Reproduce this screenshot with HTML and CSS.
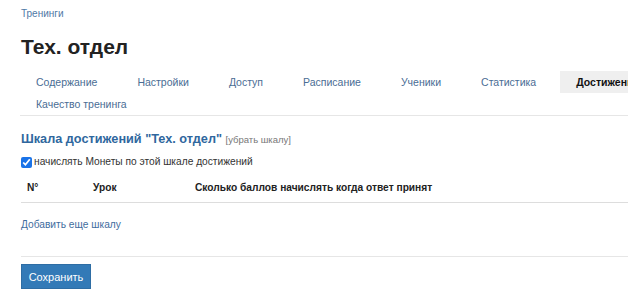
FILE: index.html
```html
<!DOCTYPE html>
<html lang="ru">
<head>
    <meta charset="UTF-8">
    <title>Тех. отдел</title>
    <link rel="stylesheet" href="styles.css">
</head>
<body>
    <div class="page">
        <a href="#" class="crumb">Тренинги</a>
        <h1>Тех. отдел</h1>

        <ul class="tabs">
            <li><a href="#">Содержание</a></li>
            <li><a href="#">Настройки</a></li>
            <li><a href="#">Доступ</a></li>
            <li><a href="#">Расписание</a></li>
            <li><a href="#">Ученики</a></li>
            <li><a href="#">Статистика</a></li>
            <li class="active"><a href="#">Достижения</a></li>
            <li><a href="#">Качество тренинга</a></li>
        </ul>

        <h3 class="scale-title">Шкала достижений "Тех. отдел" <a href="#" class="remove">[убрать шкалу]</a></h3>

        <label class="check">
            <input type="checkbox" checked> начислять Монеты по этой шкале достижений
        </label>

        <table class="scores">
            <thead>
                <tr>
                    <th class="col-num">N°</th>
                    <th class="col-lesson">Урок</th>
                    <th>Сколько баллов начислять когда ответ принят</th>
                </tr>
            </thead>
        </table>

        <a href="#" class="add-link">Добавить еще шкалу</a>

        <div class="actions">
            <button class="btn">Сохранить</button>
        </div>
    </div>
</body>
</html>
```

FILE: styles.css
```css
* {
    margin: 0;
    padding: 0;
    box-sizing: border-box;
}
html, body {
    overflow: hidden;
}
body {
    font-family: "Liberation Sans", Arial, sans-serif;
    font-size: 10.2px;
    color: #333;
    background: #fff;
}
.page {
    width: 740px;
    padding: 7px 0 0 21px;
}
a {
    color: #3a6a9c;
    text-decoration: none;
}
.crumb {
    display: block;
    font-size: 10px;
    line-height: 14px;
    color: #5079a6;
}
h1 {
    font-size: 21px;
    font-weight: 700;
    color: #222;
    line-height: 26px;
    margin-top: 13px;
    margin-bottom: 11px;
}
.tabs {
    list-style: none;
    display: flex;
    flex-wrap: wrap;
    margin-left: -1px;
    border-bottom: 1px solid #e6e6e6;
    font-size: 10.5px;
}
.tabs li {
    margin-right: 8px;
}
.tabs a {
    display: block;
    padding: 0 16px;
    line-height: 22px;
    color: #4a6d94;
    white-space: nowrap;
}
.tabs .active a {
    background: #efefef;
    color: #111;
    font-weight: 700;
}
.scale-title {
    margin-top: 14px;
    font-size: 12.7px;
    font-weight: 700;
    color: #2f679e;
    line-height: 18px;
}
.scale-title .remove {
    font-size: 9.5px;
    font-weight: 400;
    color: #777;
}
.check {
    display: flex;
    align-items: center;
    gap: 2px;
    margin-top: 5px;
    line-height: 16px;
}
.check input {
    width: 11px;
    height: 11px;
    margin: 0;
    accent-color: #1a73e8;
}
.scores {
    width: 100%;
    border-collapse: collapse;
}
.scores th {
    text-align: left;
    font-weight: 700;
    color: #222;
    line-height: 14px;
    padding: 11px 0 7px 0;
    border-bottom: 1px solid #ddd;
}
.scores .col-num {
    width: 72px;
    padding-left: 6px;
}
.scores .col-lesson {
    width: 102px;
}
.add-link {
    display: block;
    margin-top: 14px;
    line-height: 16px;
    color: #3f6d9e;
}
.actions {
    margin-top: 23px;
    border-top: 1px solid #e6e6e6;
    padding-top: 7px;
}
.btn {
    display: inline-block;
    background: #337ab7;
    color: #fff;
    border: 1px solid #2e6da4;
    font-family: Arial, "Liberation Sans", sans-serif;
    font-size: 11px;
    width: 70px;
    height: 25px;
    cursor: pointer;
}
```
